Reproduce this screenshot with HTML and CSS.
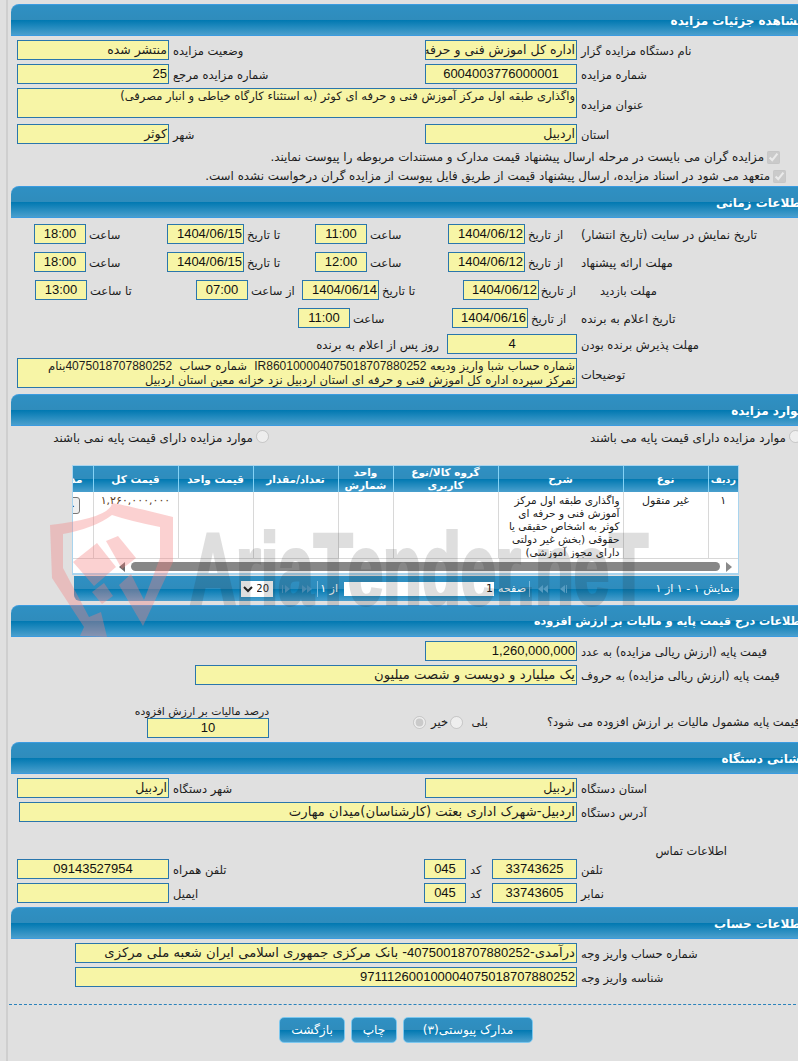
FILE: index.html
```html
<!DOCTYPE html>
<html lang="fa">
<head>
    <meta charset="utf-8">
    <title>مشاهده جزئیات مزایده</title>
    <link rel="stylesheet" href="styles.css">
</head>
<body>
<div class="page">

    <!-- جزئیات مزایده -->
    <section class="panel">
        <h2 class="panel-title">مشاهده جزئیات مزایده</h2>
        <div class="panel-body body-details">
            <div class="row r-two">
                <div class="lbl">نام دستگاه مزایده گزار</div>
                <div class="box">اداره کل اموزش فنی و حرفه ای استان اردبیل</div>
                <div class="lbl">وضعیت مزایده</div>
                <div class="box">منتشر شده</div>
            </div>
            <div class="row r-two">
                <div class="lbl">شماره مزایده</div>
                <div class="box center num">6004003776000001</div>
                <div class="lbl">شماره مزایده مرجع</div>
                <div class="box num">25</div>
            </div>
            <div class="row r-title">
                <div class="lbl lbl-mid">عنوان مزایده</div>
                <div class="box area">واگذاری طبقه اول مرکز آموزش فنی و حرفه ای کوثر (به استثناء کارگاه خیاطی و انبار مصرفی)</div>
            </div>
            <div class="row r-two gap-top">
                <div class="lbl">استان</div>
                <div class="box">اردبیل</div>
                <div class="lbl">شهر</div>
                <div class="box">کوثر</div>
            </div>
            <label class="check check-a"><input type="checkbox" checked disabled>مزایده گران می بایست در مرحله ارسال پیشنهاد قیمت مدارک و مستندات مربوطه را پیوست نمایند.</label>
            <label class="check check-b"><input type="checkbox" checked disabled>متعهد می شود در اسناد مزایده، ارسال پیشنهاد قیمت از طریق فایل پیوست از مزایده گران درخواست نشده است.</label>
        </div>
    </section>

    <!-- اطلاعات زمانی -->
    <section class="panel">
        <h2 class="panel-title">اطلاعات زمانی</h2>
        <div class="panel-body body-times">
            <div class="row r-time">
                <div class="lbl">تاریخ نمایش در سایت (تاریخ انتشار)</div>
                <div class="lbl">از تاریخ</div>
                <div class="box num">1404/06/12</div>
                <div class="lbl">ساعت</div>
                <div class="box center num">11:00</div>
                <div class="lbl">تا تاریخ</div>
                <div class="box num">1404/06/15</div>
                <div class="lbl">ساعت</div>
                <div class="box center num">18:00</div>
            </div>
            <div class="row r-time">
                <div class="lbl">مهلت ارائه پیشنهاد</div>
                <div class="lbl">از تاریخ</div>
                <div class="box num">1404/06/12</div>
                <div class="lbl">ساعت</div>
                <div class="box center num">12:00</div>
                <div class="lbl">تا تاریخ</div>
                <div class="box num">1404/06/15</div>
                <div class="lbl">ساعت</div>
                <div class="box center num">18:00</div>
            </div>
            <div class="row r-visit">
                <div class="lbl lbl-indent">مهلت بازدید</div>
                <div class="lbl">از تاریخ</div>
                <div class="box num">1404/06/12</div>
                <div class="lbl">تا تاریخ</div>
                <div class="box num">1404/06/14</div>
                <div class="lbl">از ساعت</div>
                <div class="box center num">07:00</div>
                <div class="lbl">تا ساعت</div>
                <div class="box center num">13:00</div>
            </div>
            <div class="row r-notice">
                <div class="lbl">تاریخ اعلام به برنده</div>
                <div class="lbl">از تاریخ</div>
                <div class="box num">1404/06/16</div>
                <div class="lbl">ساعت</div>
                <div class="box center num">11:00</div>
            </div>
            <div class="row r-accept">
                <div class="lbl">مهلت پذیرش برنده بودن</div>
                <div class="box center num">4</div>
                <div class="after-box">روز پس از اعلام به برنده</div>
            </div>
            <div class="row r-title">
                <div class="lbl lbl-mid">توضیحات</div>
                <div class="box area area-note">شماره حساب شبا واریز ودیعه <span class="num-sm">IR860100004075018707880252</span> &nbsp;شماره حساب &nbsp;<span class="num-sm">4075018707880252</span>بنام تمرکز سپرده اداره کل اموزش فنی و حرفه ای استان اردبیل نزد خزانه معین استان اردبیل</div>
            </div>
        </div>
    </section>

    <!-- موارد مزایده -->
    <section class="panel">
        <h2 class="panel-title">موارد مزایده</h2>
        <div class="panel-body body-items">
            <div class="radio-row">
                <label class="radio"><input type="radio" name="base" disabled>موارد مزایده دارای قیمت پایه می باشند</label>
                <label class="radio"><input type="radio" name="base" disabled>موارد مزایده دارای قیمت پایه نمی باشند</label>
            </div>

            <div class="grid-box">
                <div class="grid-scroll">
                    <table class="grid">
                        <thead>
                            <tr>
                                <th class="c-num">ردیف</th>
                                <th class="c-type">نوع</th>
                                <th class="c-desc">شرح</th>
                                <th class="c-group">گروه کالا/نوع کاربری</th>
                                <th class="c-unit">واحد شمارش</th>
                                <th class="c-qty">تعداد/مقدار</th>
                                <th class="c-price">قیمت واحد</th>
                                <th class="c-total">قیمت کل</th>
                                <th class="c-docs">مدارک</th>
                            </tr>
                        </thead>
                        <tbody>
                            <tr>
                                <td class="mid">۱</td>
                                <td class="mid">غیر منقول</td>
                                <td>واگذاری طبقه اول مرکز آموزش فنی و حرفه ای کوثر به اشخاص حقیقی یا حقوقی (بخش غیر دولتی دارای مجوز آموزشی)</td>
                                <td></td>
                                <td></td>
                                <td></td>
                                <td></td>
                                <td class="mid total">۱,۲۶۰,۰۰۰,۰۰۰</td>
                                <td class="docs"><span class="mini-btn">جزئیات</span></td>
                            </tr>
                        </tbody>
                    </table>
                </div>
                <div class="scrollbar">
                    <span class="arrow-r"></span>
                    <span class="thumb"></span>
                    <span class="arrow-l"></span>
                </div>
            </div>

            <div class="pager">
                <div class="pager-info">نمایش ۱ - ۱ از ۱</div>
                <svg class="pg-icon" viewBox="0 0 10 8"><path d="M9 0v8H8V0zM7 0v8L2 4z"/></svg>
                <svg class="pg-icon" viewBox="0 0 10 8"><path d="M5 0v8L0 4zM10 0v8L5 4z"/></svg>
                <span class="pg-sep"></span>
                <span class="pg-word">صفحه</span>
                <div class="pg-input">1</div>
                <span class="pg-of">از ۱</span>
                <span class="pg-sep"></span>
                <svg class="pg-icon on" viewBox="0 0 10 8"><path d="M0 0v8L5 4zM5 0v8L10 4z"/></svg>
                <svg class="pg-icon on" viewBox="0 0 10 8"><path d="M1 0v8H0V0zM3 0v8L8 4z"/></svg>
                <select class="pg-size"><option>20</option></select>
            </div>
        </div>
    </section>

    <!-- قیمت پایه و مالیات -->
    <section class="panel">
        <h2 class="panel-title title-tight">اطلاعات درج قیمت پایه و مالیات بر ارزش افزوده</h2>
        <div class="panel-body body-price">
            <div class="row r-price">
                <div class="lbl">قیمت پایه (ارزش ریالی مزایده) به عدد</div>
                <div class="box num">1,260,000,000</div>
            </div>
            <div class="row r-words">
                <div class="lbl">قیمت پایه (ارزش ریالی مزایده) به حروف</div>
                <div class="box txt-lg">یک میلیارد و دویست و شصت میلیون</div>
            </div>
            <div class="tax-row">
                <div class="tax-q">قیمت پایه مشمول مالیات بر ارزش افزوده می شود؟</div>
                <div class="tax-opts">
                    <span class="tax-yes">بلی</span>
                    <input type="radio" name="tax" disabled>
                    <span>خیر</span>
                    <input type="radio" name="tax" checked disabled>
                </div>
                <div class="tax-rate">
                    <div class="tax-cap">درصد مالیات بر ارزش افزوده</div>
                    <div class="box center num">10</div>
                </div>
            </div>
        </div>
    </section>

    <!-- نشانی دستگاه -->
    <section class="panel">
        <h2 class="panel-title">نشانی دستگاه</h2>
        <div class="panel-body body-address">
            <div class="row r-two">
                <div class="lbl">استان دستگاه</div>
                <div class="box">اردبیل</div>
                <div class="lbl">شهر دستگاه</div>
                <div class="box">اردبیل</div>
            </div>
            <div class="row r-addr">
                <div class="lbl">آدرس دستگاه</div>
                <div class="box txt-lg">اردبیل-شهرک اداری بعثت (کارشناسان)میدان مهارت</div>
            </div>
            <div class="contact-cap">اطلاعات تماس</div>
            <div class="row r-phone">
                <div class="lbl">تلفن</div>
                <div class="box center num">33743625</div>
                <div class="lbl">کد</div>
                <div class="box center num">045</div>
                <div class="lbl">تلفن همراه</div>
                <div class="box center num">09143527954</div>
            </div>
            <div class="row r-phone">
                <div class="lbl">نمابر</div>
                <div class="box center num">33743605</div>
                <div class="lbl">کد</div>
                <div class="box center num">045</div>
                <div class="lbl">ایمیل</div>
                <div class="box"></div>
            </div>
        </div>
    </section>

    <!-- اطلاعات حساب -->
    <section class="panel">
        <h2 class="panel-title">اطلاعات حساب</h2>
        <div class="panel-body body-account">
            <div class="row r-account">
                <div class="lbl">شماره حساب واریز وجه</div>
                <div class="box txt-lg">درآمدی-<span class="num">40750018707880252</span>- بانک مرکزی جمهوری اسلامی ایران شعبه ملی مرکزی</div>
            </div>
            <div class="row r-account">
                <div class="lbl">شناسه واریز وجه</div>
                <div class="box num">971112600100004075018707880252</div>
            </div>
        </div>
    </section>

    <div class="actions">
        <button class="btn btn-docs">مدارک پیوستی(۳)</button>
        <button class="btn btn-print">چاپ</button>
        <button class="btn btn-back">بازگشت</button>
    </div>
</div>

<!-- واترمارک -->
<svg class="watermark" viewBox="0 0 798 1061" width="798" height="1061">
    <g class="wm-red">
        <path d="M50 525 Q110 518 112 503 Q125 505 173 517 V562 L143 626 L119 585 L131 574 L144 600 L160 558 V527 Q130 521 112 515 Q95 528 63 534 V568 L89 617 L101 612 L107 637 L80 636 L84 627 L52 578 Z"/>
        <path d="M81 564 L105 545 L124 569 L102 588 Z" transform="translate(-8 -2)"/>
        <path d="M106 541 L118 536 L136 558 L122 569 Z"/>
        <path d="M92 592 L104 583 L113 596 L102 604 Z"/>
    </g>
    <g class="wm-gray">
        <text class="wm-text" x="190" y="604" textLength="458" lengthAdjust="spacingAndGlyphs">AriaTender.neT</text>
    </g>
</svg>
</body>
</html>
```

FILE: styles.css
```css
:root {
    --box-bg: #f7f5a6;
    --box-border: #2a76ac;
    --text: #1c1c1c;
    --head-grad: linear-gradient(#2f90c3 0, #2f8cbc 50%, #0078b1 50%, #4a9fcd 100%);
}

html {
    overflow: hidden;
}

body {
    margin: 0;
    background: #e0e0e0;
    color: var(--text);
    font-family: "DejaVu Sans", sans-serif;
    font-size: 11.5px;
}

.page {
    width: 805px;
    margin-left: 6px;
    padding: 4px 0 18px 3px;
    border-left: 2px solid #cfcfcf;
    box-sizing: border-box;
    direction: rtl;
}

/* panels */
.panel-title {
    height: 32px;
    margin: 0;
    padding-right: 6px;
    box-sizing: border-box;
    border-top: 1px solid #3b9be0;
    border-bottom: 1px solid #3b9be0;
    border-top-left-radius: 8px;
    background: var(--head-grad);
    color: #fff;
    font-size: 12px;
    font-weight: bold;
    line-height: 32px;
}

.title-tight {
    font-size: 11.2px;
}

.panel-body {
    box-sizing: border-box;
    padding-top: 4px;
}

.body-details { height: 150px; }
.body-times { height: 176px; padding-top: 6px; }
.body-items { height: 179px; }
.body-price { height: 105px; }
.body-address { height: 133px; }
.body-account { height: 65px; }

/* rows */
.row {
    display: grid;
    height: 20px;
    margin-bottom: 4px;
}

.r-two { grid-template-columns: 234px 152px 256px 152px; }
.r-title { grid-template-columns: 234px 560px; height: 30px; margin-bottom: 6px; }
.r-time { grid-template-columns: 230px 56px 77px 81px 52px 71px 77px 81px 52px; margin-bottom: 8px; }
.r-visit { grid-template-columns: 235px 37px 76px 84px 77px 54px 52px 109px 52px; margin-bottom: 8px; }
.r-notice { grid-template-columns: 230px 53px 76px 102px 52px; margin-bottom: 6px; }
.r-accept { grid-template-columns: 234px 130px auto; }
.r-price { grid-template-columns: 234px 152px; }
.r-words { grid-template-columns: 234px 382px; }
.r-addr { grid-template-columns: 234px 558px; }
.r-phone { grid-template-columns: 234px 85px 26px 42px 255px 152px; }
.r-account { grid-template-columns: 234px 502px; }

.lbl {
    padding: 2px 0 0 4px;
    line-height: 18px;
    text-align: left;
    white-space: nowrap;
    overflow: visible;
}

.r-time .lbl, .r-visit .lbl, .r-notice .lbl {
    padding-left: 3px;
}

.r-time .lbl:first-child, .r-notice .lbl:first-child {
    padding-left: 0;
    font-size: 11.8px;
}

.r-visit .lbl-indent {
    padding-left: 24px;
}

.lbl-mid {
    padding-top: 8px;
}

.box {
    height: 20px;
    padding: 0 1px;
    box-sizing: border-box;
    overflow: hidden;
    border: 1px solid var(--box-border);
    background: var(--box-bg);
    font-size: 12.5px;
    line-height: 18px;
    white-space: nowrap;
}

.center {
    text-align: center;
}

.num {
    font-family: "Liberation Sans", sans-serif;
    font-size: 13px;
    color: #111;
}

.num-sm {
    font-family: "Liberation Sans", sans-serif;
    font-size: 12px;
}

.txt-lg {
    font-size: 13.2px;
}

.area {
    height: 30px;
    font-size: 11.5px;
    white-space: normal;
    line-height: 15px;
}

.area-note {
    font-size: 11.6px;
    line-height: 14px;
}

.gap-top {
    margin-bottom: 4px;
}

.after-box {
    padding: 2px 8px 0 0;
    font-size: 11.8px;
    line-height: 18px;
    white-space: nowrap;
}

/* checks */
.check {
    display: flex;
    align-items: center;
    gap: 3px;
    height: 18px;
    font-size: 11.9px;
    white-space: nowrap;
}

.check-a { padding-right: 31px; margin-bottom: 1px; }
.check-b { padding-right: 25px; }

.check input, .radio input {
    margin: 0;
    flex: none;
}

/* radios */
.radio-row {
    display: grid;
    grid-template-columns: 533px auto;
    height: 35px;
    padding-right: 9px;
}

.radio {
    display: flex;
    align-items: flex-start;
    gap: 3px;
    font-size: 11.9px;
    line-height: 16px;
    white-space: nowrap;
}

/* item grid */
.grid-box {
    width: 667px;
    height: 110px;
    margin-right: 72px;
    box-sizing: border-box;
    border: 1px solid #a9d4ee;
    border-bottom-width: 2px;
    background: #fff;
}

.grid-scroll {
    height: 92px;
    overflow: hidden;
}

.grid {
    width: 705px;
    border-collapse: collapse;
    table-layout: fixed;
    font-size: 10.5px;
}

.grid th {
    height: 26px;
    padding: 0 2px;
    box-sizing: border-box;
    border-left: 1px solid #85d2f5;
    background: var(--head-grad);
    color: #fff;
    font-size: 10.5px;
    font-weight: bold;
    line-height: 13px;
}

.grid th.c-num {
    padding: 0;
    font-size: 9.5px;
}

.grid th.c-docs {
    padding-right: 10px;
    text-align: right;
}

.grid td {
    height: 65px;
    padding: 2px 3px 0;
    box-sizing: border-box;
    border-left: 1px solid #d8d8d8;
    vertical-align: top;
    line-height: 13px;
}

.mid { text-align: center; font-size: 11px; }
.total { color: #5a3b1c; white-space: nowrap; }

.c-num { width: 30px; }
.c-type { width: 85px; }
.c-desc { width: 125px; }
.c-group { width: 105px; }
.c-unit { width: 55px; }
.c-qty { width: 85px; }
.c-price { width: 75px; }
.c-total { width: 85px; }
.c-docs { width: 60px; }

.grid td.docs {
    padding: 5px 13px 0 0;
}

.mini-btn {
    display: block;
    width: 40px;
    height: 17px;
    box-sizing: border-box;
    border: 1px solid #777;
    border-radius: 3px;
    background: #efefef;
    font-size: 10px;
    line-height: 15px;
    text-align: center;
}

.scrollbar {
    display: flex;
    align-items: center;
    height: 16px;
    border-top: 1px solid #d8d8d8;
    box-sizing: border-box;
    padding-right: 6px;
}

.thumb {
    width: 589px;
    height: 9px;
    margin: 0 6px;
    border-radius: 5px;
    background: #878787;
}

.arrow-r, .arrow-l {
    width: 0;
    height: 0;
    border-top: 5px solid transparent;
    border-bottom: 5px solid transparent;
}

.arrow-r { border-left: 6px solid #8a8a8a; }
.arrow-l { border-right: 6px solid #6b6b6b; }

/* pager */
.pager {
    display: flex;
    align-items: center;
    width: 665px;
    height: 25px;
    margin: 1px 72px 0 0;
    border-bottom-left-radius: 6px;
    border-bottom-right-radius: 6px;
    background: var(--head-grad);
    color: #fff;
    font-size: 11px;
    white-space: nowrap;
}

.pager-info {
    width: 165px;
    padding-right: 6px;
}

.pg-icon {
    width: 10px;
    height: 8px;
    margin-left: 10px;
    fill: #5fb0dc;
}

.pg-icon.on {
    width: 12px;
    fill: #4f9cc9;
    margin-left: 8px;
}

.pg-sep {
    width: 1px;
    height: 16px;
    margin-left: 4px;
    background: #7dbcdf;
}

.pg-icon + .pg-sep {
    margin-right: -2px;
    margin-left: 3px;
}

.pg-word {
    width: 28px;
}

.pg-input {
    width: 150px;
    height: 14px;
    margin: 0 4px 0 6px;
    padding: 0 1px;
    box-sizing: border-box;
    background: #fff;
    color: #222;
    line-height: 14px;
}

.pg-of {
    width: 15px;
    margin-left: 5px;
}

.pg-size {
    width: 32px;
    height: 16px;
    padding: 0;
    border: 0;
    background: #fff;
    color: #222;
    font-family: "DejaVu Sans", sans-serif;
    font-size: 10px;
}

/* tax */
.tax-row {
    display: flex;
    align-items: center;
    height: 50px;
}

.tax-q {
    width: 264px;
    flex: none;
    padding-top: 16px;
    text-align: left;
    white-space: nowrap;
}

.tax-opts {
    display: flex;
    align-items: center;
    gap: 2px;
    width: 146px;
    flex: none;
    padding-top: 16px;
    padding-right: 59px;
    box-sizing: border-box;
    white-space: nowrap;
}

.tax-opts input {
    margin: 0 3px 0 0;
}

.tax-yes {
    width: 20px;
}

.tax-rate {
    width: 122px;
    margin: 0 132px 1px 0;
    flex: none;
    align-self: flex-end;
}

.tax-cap {
    height: 13px;
    font-size: 10.9px;
    line-height: 13px;
    white-space: nowrap;
}

/* address */
.contact-cap {
    height: 33px;
    padding: 18px 84px 0 0;
    box-sizing: border-box;
    line-height: 14px;
}

/* buttons */
.actions {
    display: flex;
    gap: 6px;
    height: 26px;
    padding: 12px 278px 0 0;
    margin-left: -2px;
    border-top: 1px dashed #2b82bb;
}

.btn {
    height: 26px;
    padding: 0;
    border: 1px solid #7cc7ee;
    border-radius: 5px;
    background: var(--head-grad);
    color: #fff;
    font-family: "DejaVu Sans", sans-serif;
    font-size: 12.2px;
}

.btn-docs { width: 130px; }
.btn-print { width: 46px; }
.btn-back { width: 66px; }

/* watermark over the page */
.watermark {
    position: absolute;
    left: 0;
    top: 0;
    pointer-events: none;
}

.wm-red {
    fill: rgba(244, 127, 127, 0.36);
}

.wm-gray {
    opacity: 0.15;
}

.wm-text {
    fill: #282828;
    stroke: #282828;
    stroke-width: 4px;
    font-family: "Liberation Sans", sans-serif;
    font-size: 100px;
    font-weight: bold;
    direction: ltr;
}
```
